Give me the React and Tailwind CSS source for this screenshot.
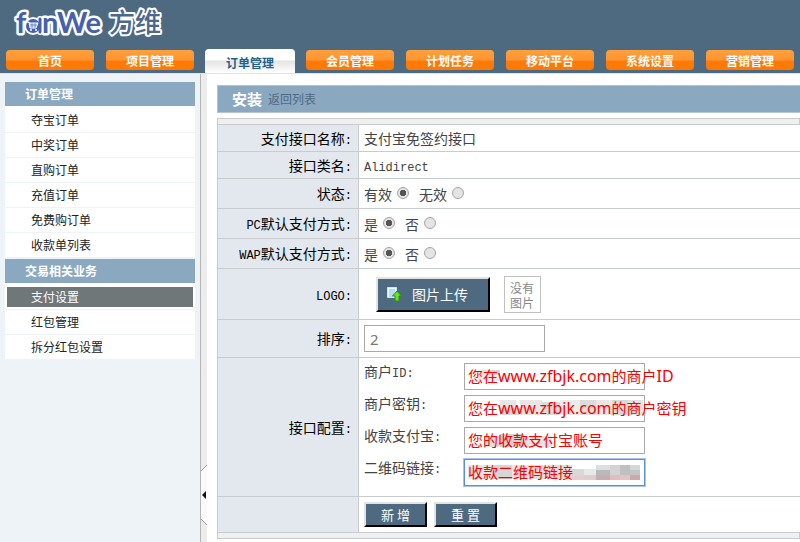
const navItems = ["首页", "项目管理", "订单管理", "会员管理", "计划任务", "移动平台", "系统设置", "营销管理"];
const activeNav = "订单管理";

const menuGroups = [
  {
    title: "订单管理",
    items: ["夺宝订单", "中奖订单", "直购订单", "充值订单", "免费购订单", "收款单列表"],
  },
  {
    title: "交易相关业务",
    items: ["支付设置", "红包管理", "拆分红包设置"],
  },
];
const activeMenu = "支付设置";

// blurred-out value cells: x, y, width, height, colour
const configFields = [
  {
    id: "merchant-id",
    label: "商户",
    latin: "ID",
    note: ["您在", "www.zfbjk.com", "的商户", "ID"],
    cells: [
      [14, 7, 10, 5, "#e3e3e3"],
      [24, 7, 12, 5, "#d6d6d6"],
      [14, 12, 22, 6, "#ececec"],
    ],
  },
  {
    id: "merchant-key",
    label: "商户密钥",
    note: ["您在", "www.zfbjk.com", "的商户密钥"],
    cells: [
      [36, 5, 16, 8, "#e6e6e6"],
      [36, 13, 20, 7, "#d9d9d9"],
      [56, 5, 22, 15, "#e9e6e6"],
      [78, 7, 18, 13, "#d8dcdc"],
      [96, 5, 20, 15, "#ececec"],
      [116, 5, 16, 15, "#dcdcdc"],
      [132, 5, 16, 15, "#efe5e5"],
      [148, 5, 16, 15, "#d5dbd8"],
      [164, 5, 15, 15, "#e3e3e3"],
    ],
  },
  {
    id: "alipay-account",
    label: "收款支付宝",
    note: ["您的收款支付宝账号"],
    cells: [
      [20, 9, 16, 11, "#e0e0e0"],
      [36, 7, 24, 13, "#d2d2d2"],
      [60, 9, 28, 11, "#e4e4e4"],
    ],
  },
  {
    id: "qrcode-link",
    label: "二维码链接",
    note: ["收款二维码链接"],
    focused: true,
    cells: [
      [4, 6, 24, 14, "#e6e6e6"],
      [28, 6, 20, 14, "#d6d6d6"],
      [48, 6, 20, 14, "#ebe4e4"],
      [68, 6, 40, 14, "#dedede"],
      [108, 10, 12, 6, "#d8d8d8"],
      [108, 16, 12, 5, "#e6cdd0"],
      [120, 10, 12, 6, "#e8e8e8"],
      [120, 16, 12, 5, "#dfcccf"],
      [132, 6, 14, 5, "#dbdfe0"],
      [132, 11, 14, 5, "#b9b9b9"],
      [132, 16, 14, 5, "#c6adb0"],
      [146, 6, 10, 10, "#d3d3d3"],
      [146, 16, 10, 5, "#e2bcc0"],
      [156, 6, 10, 10, "#bfc1c1"],
      [156, 16, 10, 5, "#e0c5c8"],
      [166, 6, 10, 5, "#d0d8d8"],
      [166, 11, 10, 5, "#c4c4c4"],
      [166, 16, 10, 5, "#caa9ac"],
    ],
  },
];

const Logo = () => (
  <svg width="170" height="46" viewBox="0 0 170 46" role="img" aria-label="fanWe 方维">
    <g
      fontFamily="Lato, sans-serif"
      fontSize="29"
      fontWeight="700"
      fill="#4560ac"
      stroke="#fff"
      strokeWidth="5"
      strokeLinejoin="round"
      paintOrder="stroke"
    >
      <text x="8" y="33">f</text>
      <text x="34" y="33">nWe</text>
    </g>
    <circle cx="25" cy="26" r="9" fill="#fff" />
    <path d="M32 19v13" stroke="#fff" strokeWidth="6" strokeLinecap="round" />
    <circle cx="25" cy="26" r="7" fill="#4560ac" />
    <path d="M32 19v13" stroke="#4560ac" strokeWidth="3" strokeLinecap="round" />
    <path d="M18 22h3l1 6h6l2-5h-9" fill="#c9d5f2" stroke="#fff" />
    <path d="M22 25h7M24 23v5M27 23v5" stroke="#4560ac" strokeWidth=".5" />
    <circle cx="23" cy="30" r="1" fill="#fff" />
    <circle cx="28" cy="30" r="1" fill="#fff" />
    <text
      x="101"
      y="32"
      fontFamily="'Noto Sans CJK SC', sans-serif"
      fontSize="26"
      fontWeight="500"
      fill="#4b6890"
      stroke="#fff"
      strokeWidth="4"
      strokeLinejoin="round"
      paintOrder="stroke"
    >
      方维
    </text>
  </svg>
);

const UploadIcon = () => (
  <svg width="16" height="16" viewBox="0 0 16 16" aria-hidden="true">
    <path d="M1.500 1.500h9v10h-9z" fill="#e6faff" stroke="#bfeaf8" />
    <path d="M3 4h6M3 6h6M3 8h5M3 10h4" stroke="#6fb6d6" strokeWidth=".8" />
    <path d="M11 5l4.500 5H13v5H9v-5H6.500z" fill="#6be02a" stroke="#2a8f10" />
  </svg>
);

const Latin = ({ children }) => (
  <span className="font-['Liberation_Mono',monospace] text-xs">{children}</span>
);

const Row = ({ label, height, align = "align-middle", children }) => (
  <tr className={`border-b border-[#c8cccf] ${height}`}>
    <th
      scope="row"
      className="w-[141px] border-x border-[#c8cccf] bg-[#e2e8ed] pr-[6px] text-right font-normal text-black"
    >
      {label}
    </th>
    <td className={`pl-[5px] ${align}`}>{children}</td>
  </tr>
);

const RadioGroup = ({ name, options }) => (
  <div className="flex gap-[10px]">
    {options.map((option, index) => (
      <label key={option} className="flex items-center gap-[5px]">
        {option}
        <input
          type="radio"
          name={name}
          defaultChecked={index === 0}
          className="mb-[2px] size-3 appearance-none rounded-full border border-[#a5a5a5] bg-[#e4e4e4] checked:bg-[radial-gradient(circle,#555_0_3px,#e4e4e4_3px)]"
        />
      </label>
    ))}
  </div>
);

const Button = ({ className, ...props }) => (
  <button
    className={`flex items-center border-2 border-t-[#e3e3e3] border-l-[#e3e3e3] border-r-black border-b-black bg-[#4e6a81] text-white ${className}`}
    {...props}
  />
);

const Header = () => (
  <header className="border-b border-[#dfe3e6] bg-[#4e6a81]">
    <div className="h-[49px] pl-2">
      <Logo />
    </div>
    <nav className="flex h-6 gap-3 overflow-hidden pl-[6px] text-xs font-bold">
      {navItems.map((item) =>
        item === activeNav ? (
          <a
            key={item}
            href="#"
            className="-mx-px flex w-[90px] shrink-0 items-center justify-center rounded-t bg-linear-to-b from-white from-45% via-[#e4e4e4] via-50% to-white pt-1 text-[#1f6286]"
          >
            {item}
          </a>
        ) : (
          <a
            key={item}
            href="#"
            className="mt-px flex h-5 w-[88px] shrink-0 items-center justify-center rounded bg-linear-to-b from-[#ffa03c] from-0% via-[#ff9430] via-50% to-[#ff7a05] to-55% pt-[2px] text-white"
          >
            {item}
          </a>
        )
      )}
    </nav>
  </header>
);

const Sidebar = () => (
  <aside className="w-[200px] shrink-0 bg-[#edf3f7] px-[5px] pt-2 text-xs text-[#222]">
    {menuGroups.map((group) => (
      <section key={group.title} className="mb-px">
        <h2 className="flex h-6 items-center bg-[#8ba8c1] pl-5 font-bold text-white">{group.title}</h2>
        <ul className="bg-white pt-[2px]">
          {group.items.map((item) => (
            <li key={item} className="h-[25px] border-b border-[#edf3f7] px-[2px] py-[2px]">
              <a
                href="#"
                className={`flex h-5 items-center pl-6 ${item === activeMenu ? "bg-[#6f7779] text-white" : ""}`}
              >
                {item}
              </a>
            </li>
          ))}
        </ul>
      </section>
    ))}
  </aside>
);

const ConfigField = ({ field }) => (
  <div className="flex">
    <label htmlFor={field.id} className="w-[100px] leading-4">
      {field.label}
      {field.latin && <Latin>{field.latin}</Latin>}
      <Latin>:</Latin>
    </label>
    <div className="relative">
      <input
        id={field.id}
        type="text"
        className={`block h-[27px] w-[181px] border bg-white outline-none ${
          field.focused ? "border-[#5b8fd6] ring-1 ring-[#a9c6ea]" : "border-[#a9a9a9]"
        }`}
      />
      <svg className="pointer-events-none absolute inset-0" width="181" height="27" aria-hidden="true">
        {field.cells.map(([x, y, width, height, fill]) => (
          <rect key={`${x}-${y}`} x={x} y={y} width={width} height={height} fill={fill} />
        ))}
      </svg>
      <span className="pointer-events-none absolute top-0 left-1 font-['Noto_Sans','Noto_Sans_CJK_SC',sans-serif] text-[15px] leading-[27px] whitespace-nowrap text-[#fa0000]">
        {field.note.map((part, index) => (
          <span key={part} className={index % 2 ? "text-base leading-[27px]" : ""}>
            {part}
          </span>
        ))}
      </span>
    </div>
  </div>
);

const PaymentForm = () => (
  <form onSubmit={(e) => e.preventDefault()}>
    <div className="h-[6px] border border-b-0 border-[#c8cccf] bg-[#f0f0f0]" />
    <table className="w-full border-collapse border-t border-[#c8cccf] text-sm leading-5 text-[#444]">
      <tbody>
        <Row height="h-[27px]" label={<>支付接口名称<Latin>:</Latin></>}>
          支付宝免签约接口
        </Row>
        <Row height="h-[27px]" label={<>接口类名<Latin>:</Latin></>}>
          <Latin>Alidirect</Latin>
        </Row>
        <Row height="h-[30px]" label={<>状态<Latin>:</Latin></>}>
          <RadioGroup name="status" options={["有效", "无效"]} />
        </Row>
        <Row height="h-[30px]" label={<><Latin>PC</Latin>默认支付方式<Latin>:</Latin></>}>
          <RadioGroup name="pc" options={["是", "否"]} />
        </Row>
        <Row height="h-[30px]" label={<><Latin>WAP</Latin>默认支付方式<Latin>:</Latin></>}>
          <RadioGroup name="wap" options={["是", "否"]} />
        </Row>
        <Row height="h-[51px]" label={<Latin>LOGO:</Latin>}>
          <div className="flex items-center gap-[14px] pl-3">
            <Button type="button" className="h-[35px] w-[114px] gap-[10px] pl-2">
              <UploadIcon />
              图片上传
            </Button>
            <div className="size-[37px] border border-[#c0c0c0] px-[5px] py-[3px] text-xs leading-[15px] text-[#888]">
              没有图片
            </div>
          </div>
        </Row>
        <Row height="h-[38px]" label={<label htmlFor="sort">排序<Latin>:</Latin></label>}>
          <input
            id="sort"
            type="text"
            defaultValue="2"
            className="block h-[27px] w-[181px] border border-[#a9a9a9] bg-white px-[5px] font-['Noto_Sans',sans-serif] text-[15px] text-[#777]"
          />
        </Row>
        <Row height="h-[139px]" align="pt-[5px] align-top" label={<>接口配置<Latin>:</Latin></>}>
          <div className="flex flex-col gap-[5px]">
            {configFields.map((field) => (
              <ConfigField key={field.id} field={field} />
            ))}
          </div>
        </Row>
        <Row height="h-[36px]" label="">
          <div className="flex gap-[7px]">
            <Button type="submit" className="h-[25px] w-[63px] justify-center text-[13px]">新 增</Button>
            <Button type="reset" className="h-[25px] w-[63px] justify-center text-[13px]">重 置</Button>
          </div>
        </Row>
      </tbody>
    </table>
    <div className="h-[6px] border border-t-0 border-[#c8cccf] bg-[#f0f0f0]" />
  </form>
);

const App = () => (
  <div className="flex min-h-screen flex-col overflow-hidden bg-white font-['Noto_Sans_CJK_SC',sans-serif]">
    <Header />
    <div className="flex flex-1">
      <Sidebar />
      <div className="w-[7px] shrink-0 border-l border-[#b5b5b5] bg-[#ececec] pt-[391px]">
        <button type="button" aria-label="收起菜单" className="block">
          <svg width="6" height="60" viewBox="0 0 6 60">
            <path d="M0 6L6 0v60l-6-6z" fill="#fafafa" />
            <path d="M0 6l6-6M0 54l6 6" stroke="#999" />
            <path d="M5 26v8l-4-4z" fill="#111" />
          </svg>
        </button>
      </div>
      <main className="min-w-0 flex-1 pt-[11px] pb-[3px] pl-[10px]">
        <div className="mb-[5px] flex h-7 items-center gap-[6px] border-y border-l border-[#b9c3cb] bg-[#8ba8c1] pl-[14px]">
          <h1 className="text-[15px] font-bold text-white">安装</h1>
          <a href="#" className="text-xs text-[#4e6a81]">返回列表</a>
        </div>
        <PaymentForm />
      </main>
    </div>
  </div>
);

export default App;
